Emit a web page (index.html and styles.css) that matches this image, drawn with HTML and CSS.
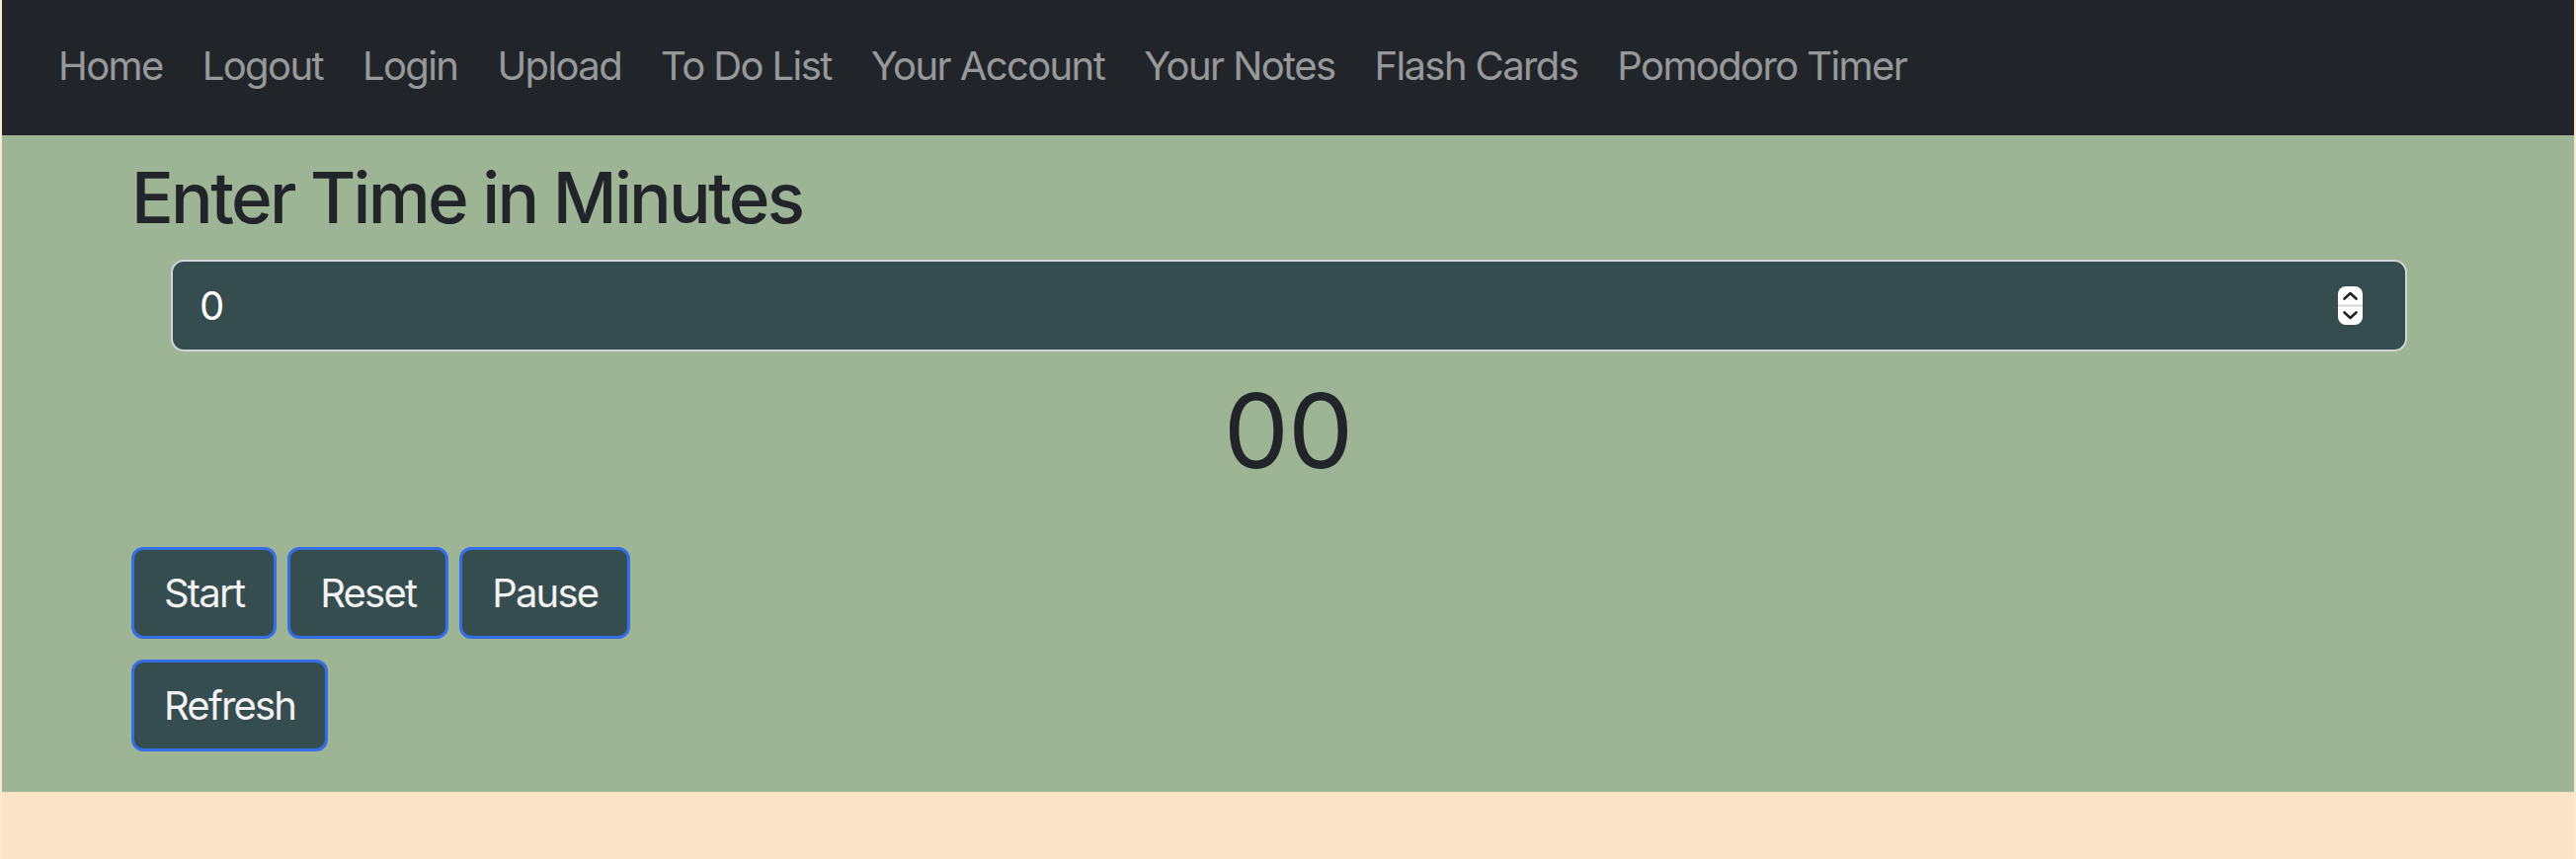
FILE: index.html
```html
<!DOCTYPE html>
<html lang="en">
<head>
<meta charset="utf-8">
<title>Pomodoro Timer</title>
<link rel="stylesheet" href="styles.css">
</head>
<body>
<div class="frame">
  <nav class="navbar">
    <a class="nav-link" href="#">Home</a>
    <a class="nav-link" href="#">Logout</a>
    <a class="nav-link" href="#">Login</a>
    <a class="nav-link" href="#">Upload</a>
    <a class="nav-link" href="#">To Do List</a>
    <a class="nav-link" href="#">Your Account</a>
    <a class="nav-link" href="#">Your Notes</a>
    <a class="nav-link" href="#">Flash Cards</a>
    <a class="nav-link" href="#">Pomodoro Timer</a>
  </nav>
  <main class="timer-section">
    <div class="container">
      <h2 class="title">Enter Time in Minutes</h2>
      <div class="time-input">
        <span class="time-value">0</span>
        <svg class="spinner" width="25" height="39" viewBox="0 0 25 39">
          <rect x="0" y="0" width="25" height="39" rx="8" fill="#ffffff"/>
          <line x1="0" y1="19.5" x2="25" y2="19.5" stroke="#d2d2d2" stroke-width="2"/>
          <path d="M6.5 12.5 L12.5 7 L18.5 12.5" fill="none" stroke="#222" stroke-width="2.6" stroke-linecap="round" stroke-linejoin="round"/>
          <path d="M6.5 26.5 L12.5 32 L18.5 26.5" fill="none" stroke="#222" stroke-width="2.6" stroke-linecap="round" stroke-linejoin="round"/>
        </svg>
      </div>
      <div class="countdown">00</div>
      <div class="btn-row btn-row-main">
        <button class="btn">Start</button>
        <button class="btn">Reset</button>
        <button class="btn">Pause</button>
      </div>
      <div class="btn-row btn-row-extra">
        <button class="btn">Refresh</button>
      </div>
    </div>
  </main>
</div>
</body>
</html>
```

FILE: styles.css
```css
html, body {
  margin: 0;
  padding: 0;
}

body {
  background: #fce4c8;
  font-family: Inter, "Liberation Sans", sans-serif;
  height: 870px;
  overflow: hidden;
}

.frame {
  min-height: 870px;
  border-left: 2px solid rgba(255, 255, 255, 0.18);
  border-right: 2px solid rgba(255, 255, 255, 0.18);
  box-sizing: border-box;
}

.navbar {
  height: 137px;
  background: #212529;
  display: flex;
  align-items: center;
  padding-left: 37px;
  padding-bottom: 3px;
  box-sizing: border-box;
}

.nav-link {
  color: rgba(255, 255, 255, 0.55);
  text-decoration: none;
  font-size: 40px;
  letter-spacing: -0.04em;
  padding: 0 20px;
  line-height: 60px;
}

.timer-section {
  background: #9db594;
  padding-bottom: 41px;
}

.container {
  padding: 0 131px;
  display: flex;
  flex-direction: column;
}

.title {
  margin: 21px 0 20px;
  font-size: 71px;
  font-weight: 500;
  line-height: 1.2;
  letter-spacing: -0.038em;
  color: #212529;
}

.time-input {
  margin: 0 38px 0 40px;
  height: 93px;
  box-sizing: border-box;
  border: 2px solid #d0d5d9;
  border-radius: 13px;
  background: #364d50;
  display: flex;
  align-items: center;
  justify-content: space-between;
  padding: 0 43px 0 27px;
}

.time-value {
  color: #ffffff;
  font-size: 40px;
}

.countdown {
  margin-top: 17px;
  text-align: center;
  font-size: 105px;
  line-height: 1.2;
  color: #212529;
  letter-spacing: -0.01em;
}

.btn-row {
  display: flex;
  gap: 11px;
}

.btn-row-main {
  margin-top: 55px;
}

.btn-row-extra {
  margin-top: 21px;
}

.btn {
  height: 93px;
  padding: 0 30px;
  background: #364d50;
  color: #f2f2f2;
  border: 3px solid #356ee6;
  border-radius: 12px;
  font-family: Inter, "Liberation Sans", sans-serif;
  font-size: 40px;
  letter-spacing: -0.045em;
  cursor: pointer;
}
```
